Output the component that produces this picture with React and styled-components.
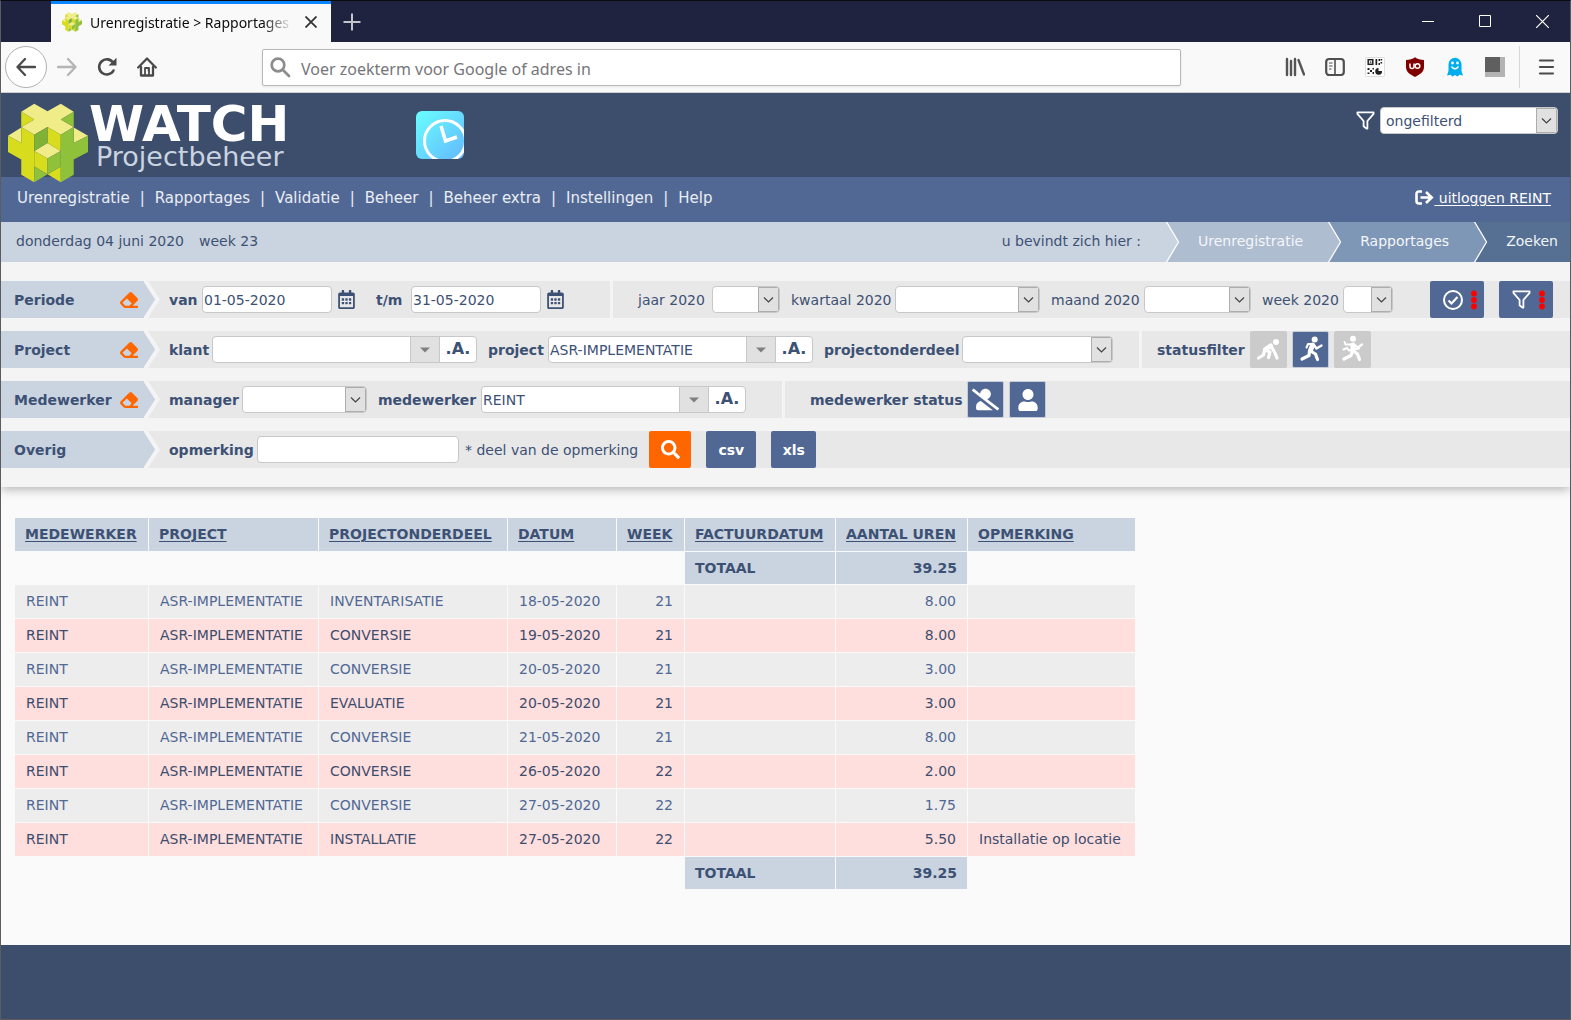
import React from 'react'
import styled, { createGlobalStyle } from 'styled-components'
import { FaEraser, FaUser, FaUserSlash, FaSearch, FaRegCalendarAlt } from 'react-icons/fa'

const hours = [
    { project: 'ASR-IMPLEMENTATIE', part: 'INVENTARISATIE', date: '18-05-2020', week: 21, hours: '8.00', note: '' },
    { project: 'ASR-IMPLEMENTATIE', part: 'CONVERSIE', date: '19-05-2020', week: 21, hours: '8.00', note: '' },
    { project: 'ASR-IMPLEMENTATIE', part: 'CONVERSIE', date: '20-05-2020', week: 21, hours: '3.00', note: '' },
    { project: 'ASR-IMPLEMENTATIE', part: 'EVALUATIE', date: '20-05-2020', week: 21, hours: '3.00', note: '' },
    { project: 'ASR-IMPLEMENTATIE', part: 'CONVERSIE', date: '21-05-2020', week: 21, hours: '8.00', note: '' },
    { project: 'ASR-IMPLEMENTATIE', part: 'CONVERSIE', date: '26-05-2020', week: 22, hours: '2.00', note: '' },
    { project: 'ASR-IMPLEMENTATIE', part: 'CONVERSIE', date: '27-05-2020', week: 22, hours: '1.75', note: '' },
    { project: 'ASR-IMPLEMENTATIE', part: 'INSTALLATIE', date: '27-05-2020', week: 22, hours: '5.50', note: 'Installatie op locatie' },
]

const columns = [
    { title: 'MEDEWERKER', width: 133 },
    { title: 'PROJECT', width: 169 },
    { title: 'PROJECTONDERDEEL', width: 188 },
    { title: 'DATUM', width: 108 },
    { title: 'WEEK', width: 67 },
    { title: 'FACTUURDATUM', width: 150 },
    { title: 'AANTAL UREN', width: 131 },
    { title: 'OPMERKING', width: 167 },
]

const menu = ['Urenregistratie', 'Rapportages', 'Validatie', 'Beheer', 'Beheer extra', 'Instellingen', 'Help']

/* ---------- drawings ---------- */

const CubeLogo = ({ size }) => (
    <svg width={size} height={size} viewBox="24 41 241 238" aria-hidden="true">
        <g fill="#f0ec88">
            <path d="M24 138L64 113V160Z" />
            <path d="M265 138L222 113V160Z" />
            <path d="M64 66L103 42L143 64L183 42L222 66L183 89L222 112L183 135L143 112L103 135L64 112L103 89Z" />
            <path d="M103 184L143 160L183 184L143 207Z" />
        </g>
        <g fill="#d7dc1c">
            <path d="M64 66L103 89L64 112Z" />
            <path d="M24 138L64 160V112L103 135V278L64 256V210L24 187Z" />
            <path d="M103 184L143 207V254L103 231Z" />
            <path d="M183 135L143 112V160L183 184Z" />
            <path d="M183 278L143 254L183 231Z" />
        </g>
        <g fill="#90c13b">
            <path d="M222 66L183 89L222 112Z" />
            <path d="M265 138L222 160V112L183 135V278L222 256V210L265 187Z" />
            <path d="M183 184L143 207V254L183 231Z" />
            <path d="M103 278L143 254L103 231Z" />
        </g>
        <path fill="#80b236" d="M103 135L143 112V160L103 184Z" />
    </svg>
)

const ClockLogo = () => (
    <svg width="49" height="49" viewBox="0 0 49 49" aria-hidden="true">
        <defs>
            <linearGradient id="clockBg" x1="0" y1="0" x2="1" y2="1">
                <stop offset="0" stopColor="#68ffff" />
                <stop offset="1" stopColor="#64b8ff" />
            </linearGradient>
            <clipPath id="clockClip"><rect width="48" height="48" rx="6" /></clipPath>
        </defs>
        <g clipPath="url(#clockClip)">
            <rect width="48" height="48" fill="url(#clockBg)" />
            <circle cx="29" cy="30" r="20.5" fill="none" stroke="#fff" strokeWidth="3" />
            <path d="M25 15L29.5 30L41 26" fill="none" stroke="#fff" strokeWidth="3.5" />
        </g>
    </svg>
)

const FilterIcon = ({ size }) => (
    <svg width={size} height={size} viewBox="0 0 20 20" fill="none" stroke="currentColor" strokeWidth="1.9" strokeLinejoin="round" aria-hidden="true">
        <path d="M1.5 1.5H18.5V3L12 10.5V18.5H11L8 16V10.5L1.5 3Z" />
    </svg>
)

const CheckIcon = () => (
    <svg width="20" height="20" viewBox="0 0 20 20" fill="none" stroke="currentColor" strokeWidth="2" aria-hidden="true">
        <circle cx="10" cy="10" r="9" />
        <path d="M5.5 10.5L8.5 13.5L14.5 7" strokeWidth="2.2" />
    </svg>
)

const DotsIcon = () => (
    <svg width="6" height="20" viewBox="0 0 6 20" fill="#f00" aria-hidden="true">
        <circle cx="3" cy="3.5" r="2.9" />
        <circle cx="3" cy="10" r="2.9" />
        <circle cx="3" cy="16.5" r="2.9" />
    </svg>
)

const SignOutIcon = () => (
    <svg width="19" height="15" viewBox="0 0 19 15" fill="none" stroke="currentColor" strokeWidth="2.6" aria-hidden="true">
        <path d="M7 1.5H4Q1.5 1.5 1.5 4V11Q1.5 13.5 4 13.5H7" />
        <path d="M5.5 7.5H16M11 2L16.7 7.5L11 13" />
    </svg>
)

const ArrowDown = () => (
    <svg width="11" height="6" viewBox="0 0 11 6" fill="none" stroke="#444" strokeWidth="1.2" aria-hidden="true">
        <path d="M1 0.5L5.5 5L10 0.5" />
    </svg>
)

const Caret = () => (
    <svg width="10" height="6" viewBox="0 0 10 6" fill="#808080" aria-hidden="true">
        <path d="M0 0.5H10L5 5.5Z" />
    </svg>
)

// arrow end between two coloured blocks
const Arrow = ({ from, to, height, line }) => (
    <svg width="16" height={height} viewBox={`0 0 16 ${height}`} aria-hidden="true">
        <rect width="16" height={height} fill={to} />
        <path d={`M0 0H1L13 ${height / 2}L1 ${height}H0Z`} fill={from} />
        <path d={`M1 -1L13.5 ${height / 2}L1 ${height + 1}`} fill="none" stroke={line ? '#f4f4f4' : '#fff'} strokeWidth={line || 1.3} />
    </svg>
)

const Figure = ({ children }) => (
    <svg width="37" height="37" viewBox="0 0 37 37" fill="none" stroke="#fff" strokeWidth="3.2" strokeLinecap="round" strokeLinejoin="round" aria-hidden="true">
        {children}
    </svg>
)

const StartFigure = () => (
    <Figure>
        <circle cx="26" cy="11" r="3" fill="#fff" stroke="none" />
        <path d="M20.5 15L15.5 18.5" strokeWidth="5" />
        <path d="M21 15L24.5 21L27 27" />
        <path d="M15.5 19L20 21L18.5 26.5" />
        <path d="M14.5 19.5L13.5 24L8.5 27" />
    </Figure>
)

const RunFigure = () => (
    <Figure>
        <circle cx="22.7" cy="8.5" r="3" fill="#fff" stroke="none" />
        <path d="M20.5 14L18.5 19.5" strokeWidth="5" />
        <path d="M20 13L16 13L14.5 16.5" strokeWidth="2" />
        <path d="M22 14L24.5 17.5L29.5 14.5" strokeWidth="2.4" />
        <path d="M18.5 20L23.5 23L25.5 28.5" />
        <path d="M17.5 20L17 24.5L10 28" />
    </Figure>
)

const FinishFigure = () => (
    <Figure>
        <circle cx="19" cy="7.7" r="3" fill="#fff" stroke="none" />
        <path d="M19 14L19 19.5" strokeWidth="5" />
        <path d="M17.5 13.5L11.5 13.5L10.5 11" strokeWidth="2" />
        <path d="M20.5 14L24 16.5L28 13.5" strokeWidth="2.2" />
        <path d="M9.5 18.5L13 17L15 19.5L25 17.5" strokeWidth="2" />
        <path d="M19.5 20L23.5 23L25.5 28.5" />
        <path d="M18.5 20L17 24.5L10 28" />
    </Figure>
)

const BackIcon = () => (
    <svg width="20" height="20" viewBox="0 0 20 20" fill="none" stroke="#4a4a4a" strokeWidth="2.3" strokeLinecap="round" strokeLinejoin="round" aria-hidden="true">
        <path d="M19 10H1.5M9 2L1.5 10L9 18" />
    </svg>
)

const ForwardIcon = () => (
    <svg width="20" height="20" viewBox="0 0 20 20" fill="none" stroke="#b5b5b5" strokeWidth="2.3" strokeLinecap="round" strokeLinejoin="round" aria-hidden="true">
        <path d="M1 10H18.5M11 2L18.5 10L11 18" />
    </svg>
)

const ReloadIcon = () => (
    <svg width="20" height="20" viewBox="0 0 20 20" fill="none" stroke="#4a4a4a" strokeWidth="2.6" aria-hidden="true">
        <path d="M16.5 13.5A7.6 7.6 0 1 1 16 5.5" strokeLinecap="round" />
        <path d="M19.5 0.8V8.5H11.5Z" fill="#4a4a4a" stroke="none" />
    </svg>
)

const HomeIcon = () => (
    <svg width="20" height="20" viewBox="0 0 20 20" fill="none" stroke="#4a4a4a" strokeWidth="2.3" strokeLinecap="round" strokeLinejoin="round" aria-hidden="true">
        <path d="M1.2 10.5L10 1.5L18.8 10.5" />
        <path d="M4 10V18.5H16V10" />
        <path d="M8 18V11H12V18" strokeWidth="1.8" />
        <path d="M11.5 12V14" strokeWidth="1.5" />
    </svg>
)

const MagnifierIcon = () => (
    <svg width="21" height="21" viewBox="0 0 21 21" fill="none" stroke="#8c8c8c" strokeWidth="2.7" strokeLinecap="round" aria-hidden="true">
        <circle cx="8" cy="8" r="6.3" />
        <path d="M13 13L19 19" />
    </svg>
)

const LibraryIcon = () => (
    <svg width="20" height="20" viewBox="0 0 20 20" stroke="#555" strokeWidth="2.4" strokeLinecap="round" aria-hidden="true">
        <path d="M2 2V18M6 4V18M10 2V18M13.5 3L19 17.5" />
    </svg>
)

const SidebarIcon = () => (
    <svg width="20" height="20" viewBox="0 0 20 20" fill="none" stroke="#4f4f4f" strokeWidth="2.2" aria-hidden="true">
        <rect x="1.2" y="2" width="17.6" height="16" rx="3" />
        <path d="M10 2V18" strokeWidth="1.6" />
        <path d="M4 6H7.5M4 9H7.5M4 12H6.5" strokeWidth="1.2" />
    </svg>
)

const QrIcon = () => (
    <svg width="20" height="20" viewBox="0 0 20 20" aria-hidden="true">
        <rect x="0.5" y="0.5" width="19" height="19" rx="1" fill="#fff" stroke="#ddd" />
        <rect x="3.2" y="2.7" width="4.6" height="4.6" fill="none" stroke="#222" strokeWidth="1.5" />
        <g fill="#222">
            <path d="M4.8 4.5h1.5v1.3h-1.5zM10.5 2h1.7v6h-1.7zM13.5 2h1.5v2h-1.5zM15.5 2h1.7v1.5h-1.7zM15.5 5h1.7v1.5h-1.7zM13.5 6h1.5v2h-1.5z" />
            <path d="M2.5 11h2v2h-2zM5 13h2v2h-2zM7.5 11h1.5v1.5h-1.5zM2.5 15.5h2v1.5h-2zM7.5 15h1.5v2h-1.5z" />
            <path d="M13.5 11V14H17A3.4 3.4 0 1 1 13.5 11Z" />
        </g>
    </svg>
)

const ShieldIcon = () => (
    <svg width="20" height="20" viewBox="0 0 20 20" aria-hidden="true">
        <path d="M10 0.3C7.5 2.2 4.5 3 1 3V10C1 15 5 17.5 10 20C15 17.5 19 15 19 10V3C15.5 3 12.5 2.2 10 0.3Z" fill="#800000" />
        <path d="M5 6.5V9.5Q5 11.5 7 11.5Q9 11.5 9 9.5V6.5" fill="none" stroke="#fff" strokeWidth="1.5" />
        <circle cx="12.5" cy="9" r="2.3" fill="none" stroke="#fff" strokeWidth="1.5" />
    </svg>
)

const GhostIcon = () => (
    <svg width="20" height="20" viewBox="0 0 20 20" aria-hidden="true">
        <path d="M3.5 7.5A6.5 6.8 0 0 1 16.5 7.5V14L18 18.5L14.5 17.8L12.5 19.5L10 18L7.5 19.5L5.5 17.8L2 18.5L3.5 14Z" fill="#00aef0" />
        <circle cx="7.5" cy="6" r="1.4" fill="#fff" />
        <circle cx="12.5" cy="6" r="1.4" fill="#fff" />
        <path d="M6.5 9.5Q10 14 13.5 9.5" fill="none" stroke="#fff" strokeWidth="1.3" />
    </svg>
)

const SquareIcon = () => (
    <svg width="20" height="20" viewBox="0 0 20 20" aria-hidden="true">
        <path d="M0 0H20V20H0Z" fill="#b3b3b3" />
        <path d="M0 0H15V15H0Z" fill="#5f5f5f" />
    </svg>
)

const MenuIcon = () => (
    <svg width="17" height="20" viewBox="0 0 17 20" stroke="#4a4a4a" strokeWidth="2.2" strokeLinecap="round" aria-hidden="true">
        <path d="M2 3.5H15M2 10H15M2 16.5H15" />
    </svg>
)

/* ---------- small building blocks ---------- */

const Select = ({ id, width, label, value = '' }) => (
    <SelectBox $width={width}>
        <select id={id} aria-label={label} defaultValue={value}>
            <option value={value}>{value}</option>
        </select>
        <SelectArrow><ArrowDown /></SelectArrow>
    </SelectBox>
)

const Combo = ({ id, value = '' }) => (
    <ComboBox>
        <input id={id} type="text" defaultValue={value} />
        <DropButton type="button" aria-label="lijst"><Caret /></DropButton>
        <AllButton type="button">.A.</AllButton>
    </ComboBox>
)

const FilterName = ({ children, clear }) => (
    <>
        <RowName>
            {children}
            {clear && <ClearButton type="button" aria-label="wissen"><FaEraser size={18} /></ClearButton>}
        </RowName>
        <Arrow from="#cad4e0" to="#e8e8e8" height={37} line={4} />
    </>
)

const TotalRow = () => (
    <tr>
        <EmptyCell colSpan={5} />
        <TotalCell>TOTAAL</TotalCell>
        <TotalCell $right>39.25</TotalCell>
        <EmptyCell />
    </tr>
)

const App = () => {
    return (
        <Window>
            <GlobalStyle />

            <TabBar>
                <Tab>
                    <CubeLogo size={20} />
                    <TabTitle>Urenregistratie &gt; Rapportages</TabTitle>
                    <TabButton type="button" aria-label="tabblad sluiten">
                        <svg width="12" height="12" viewBox="0 0 12 12" stroke="#333" strokeWidth="1.8" aria-hidden="true"><path d="M0.5 0.5L11.5 11.5M11.5 0.5L0.5 11.5" /></svg>
                    </TabButton>
                </Tab>
                <TabButton type="button" aria-label="nieuw tabblad">
                    <svg width="18" height="18" viewBox="0 0 18 18" stroke="#c4c4cc" strokeWidth="2" aria-hidden="true"><path d="M9 0.5V17.5M0.5 9H17.5" /></svg>
                </TabButton>
                <WindowButtons>
                    <TabButton type="button" aria-label="minimaliseren">
                        <svg width="13" height="13" viewBox="0 0 13 13" stroke="#fff" aria-hidden="true"><path d="M0 6.5H12" /></svg>
                    </TabButton>
                    <TabButton type="button" aria-label="maximaliseren">
                        <svg width="13" height="13" viewBox="0 0 13 13" stroke="#fff" fill="none" aria-hidden="true"><path d="M0.5 0.5H11.5V11.5H0.5Z" /></svg>
                    </TabButton>
                    <TabButton type="button" aria-label="sluiten">
                        <svg width="13" height="13" viewBox="0 0 13 13" stroke="#fff" strokeWidth="1.2" aria-hidden="true"><path d="M0 0L13 13M13 0L0 13" /></svg>
                    </TabButton>
                </WindowButtons>
            </TabBar>

            <Toolbar>
                <BackButton type="button" aria-label="terug"><BackIcon /></BackButton>
                <ToolButtons>
                    <ToolButton type="button" aria-label="vooruit"><ForwardIcon /></ToolButton>
                    <ToolButton type="button" aria-label="vernieuwen"><ReloadIcon /></ToolButton>
                    <ToolButton type="button" aria-label="startpagina"><HomeIcon /></ToolButton>
                </ToolButtons>
                <AddressBar>
                    <MagnifierIcon />
                    <input type="text" aria-label="adres" placeholder="Voer zoekterm voor Google of adres in" />
                </AddressBar>
                <ToolButtons>
                    <ToolButton type="button" aria-label="bibliotheek"><LibraryIcon /></ToolButton>
                    <ToolButton type="button" aria-label="zijbalk"><SidebarIcon /></ToolButton>
                    <ToolButton type="button" aria-label="qr-code"><QrIcon /></ToolButton>
                    <ToolButton type="button" aria-label="blokkering"><ShieldIcon /></ToolButton>
                    <ToolButton type="button" aria-label="privacy"><GhostIcon /></ToolButton>
                    <ToolButton type="button" aria-label="extensie"><SquareIcon /></ToolButton>
                </ToolButtons>
                <MenuButton type="button" aria-label="menu"><MenuIcon /></MenuButton>
            </Toolbar>

            <Header>
                <Brand href="#home">
                    <CubeLogo size={80} />
                    <BrandText>
                        <BrandName>WATCH</BrandName>
                        <BrandSub>Projectbeheer</BrandSub>
                    </BrandText>
                </Brand>
                <ClockLink href="#klok" aria-label="klok"><ClockLogo /></ClockLink>
                <HeaderFilter>
                    <FilterIcon size={19} />
                    <Select width={178} label="filter" value="ongefilterd" />
                </HeaderFilter>
            </Header>

            <Nav>
                <NavList>
                    {menu.map((item) => (
                        <li key={item}><a href={`#${item}`}>{item}</a></li>
                    ))}
                </NavList>
                <Logout href="#uitloggen"><SignOutIcon /><u>&nbsp;uitloggen REINT</u></Logout>
            </Nav>

            <InfoBar>
                <span>donderdag 04 juni 2020</span>
                <span>week 23</span>
                <Crumbs>
                    <Crumb $text="#3d5174">u bevindt zich hier :</Crumb>
                    <Arrow from="#cad4e0" to="#afbdd1" height={40} />
                    <Crumb as="a" href="#urenregistratie" $bg="#afbdd1">Urenregistratie</Crumb>
                    <Arrow from="#afbdd1" to="#7f97b7" height={40} />
                    <Crumb as="a" href="#rapportages" $bg="#7f97b7">Rapportages</Crumb>
                    <Arrow from="#7f97b7" to="#557093" height={40} />
                    <Crumb as="a" href="#zoeken" $bg="#557093" $last>Zoeken</Crumb>
                </Crumbs>
            </InfoBar>

            <Filters>
                <FilterRow>
                    <FilterName clear>Periode</FilterName>
                    <Field>
                        <Label htmlFor="van" $width={33}>van</Label>
                        <TextInput id="van" $width={130} defaultValue="01-05-2020" />
                        <CalendarButton type="button" aria-label="kies begindatum"><FaRegCalendarAlt size={19} /></CalendarButton>
                    </Field>
                    <Field>
                        <Label htmlFor="tm" $width={35}>t/m</Label>
                        <TextInput id="tm" $width={130} defaultValue="31-05-2020" />
                        <CalendarButton type="button" aria-label="kies einddatum"><FaRegCalendarAlt size={19} /></CalendarButton>
                    </Field>
                    <Divider $space={25} />
                    <Field>
                        <Label htmlFor="jaar" $width={74} $light>jaar 2020</Label>
                        <Select id="jaar" width={68} />
                    </Field>
                    <Field>
                        <Label htmlFor="kwartaal" $width={104} $light>kwartaal 2020</Label>
                        <Select id="kwartaal" width={145} />
                    </Field>
                    <Field>
                        <Label htmlFor="maand" $width={93} $light>maand 2020</Label>
                        <Select id="maand" width={107} />
                    </Field>
                    <Field>
                        <Label htmlFor="week" $width={81} $light>week 2020</Label>
                        <Select id="week" width={50} />
                    </Field>
                    <RowActions>
                        <ActionButton type="button" $width={54} $dots aria-label="bevestigen"><CheckIcon /><DotsIcon /></ActionButton>
                        <ActionButton type="button" $width={54} $dots aria-label="filteren"><FilterIcon size={19} /><DotsIcon /></ActionButton>
                    </RowActions>
                </FilterRow>

                <FilterRow>
                    <FilterName clear>Project</FilterName>
                    <Field>
                        <Label htmlFor="klant" $width={43}>klant</Label>
                        <Combo id="klant" />
                    </Field>
                    <Field>
                        <Label htmlFor="project" $width={60}>project</Label>
                        <Combo id="project" value="ASR-IMPLEMENTATIE" />
                    </Field>
                    <Field>
                        <Label htmlFor="onderdeel" $width={138}>projectonderdeel</Label>
                        <Select id="onderdeel" width={151} />
                    </Field>
                    <Divider $space={15} />
                    <Label as="span" $width={93}>statusfilter</Label>
                    <StatusButtons>
                        <StatusButton type="button" aria-label="gestart"><StartFigure /></StatusButton>
                        <StatusButton type="button" aria-label="lopend" $active><RunFigure /></StatusButton>
                        <StatusButton type="button" aria-label="afgerond"><FinishFigure /></StatusButton>
                    </StatusButtons>
                </FilterRow>

                <FilterRow>
                    <FilterName clear>Medewerker</FilterName>
                    <Field>
                        <Label htmlFor="manager" $width={73}>manager</Label>
                        <Select id="manager" width={125} />
                    </Field>
                    <Field>
                        <Label htmlFor="medewerker" $width={103}>medewerker</Label>
                        <Combo id="medewerker" value="REINT" />
                    </Field>
                    <Divider $space={25} />
                    <Label as="span" $width={157}>medewerker status</Label>
                    <StatusButtons>
                        <StatusButton type="button" aria-label="inactief" $active><FaUserSlash size={27} /></StatusButton>
                        <StatusButton type="button" aria-label="actief" $active><FaUser size={22} /></StatusButton>
                    </StatusButtons>
                </FilterRow>

                <FilterRow>
                    <FilterName>Overig</FilterName>
                    <Field>
                        <Label htmlFor="opmerking" $width={88}>opmerking</Label>
                        <TextInput id="opmerking" $width={202} />
                        <Hint>* deel van de opmerking</Hint>
                    </Field>
                    <Exports>
                        <ActionButton type="submit" $width={42} $orange aria-label="zoeken"><FaSearch size={19} /></ActionButton>
                        <ActionButton type="button" $width={50}>csv</ActionButton>
                        <ActionButton type="button" $width={45}>xls</ActionButton>
                    </Exports>
                </FilterRow>
            </Filters>

            <Content>
                <Table>
                    <colgroup>
                        {columns.map((c) => <Col key={c.title} $width={c.width} />)}
                    </colgroup>
                    <thead>
                        <tr>
                            {columns.map((c) => <th key={c.title}><a href={`#${c.title}`}>{c.title}</a></th>)}
                        </tr>
                    </thead>
                    <tbody>
                        <TotalRow />
                        {hours.map((row, i) => (
                            <DataRow key={i} $pink={i % 2 === 1}>
                                <td>REINT</td>
                                <td>{row.project}</td>
                                <td>{row.part}</td>
                                <td>{row.date}</td>
                                <NumberCell>{row.week}</NumberCell>
                                <td />
                                <NumberCell>{row.hours}</NumberCell>
                                <td>{row.note}</td>
                            </DataRow>
                        ))}
                        <TotalRow />
                    </tbody>
                </Table>
            </Content>

            <Footer />
        </Window>
    )
}

export default App

const GlobalStyle = createGlobalStyle`
    * {
        box-sizing: border-box;
    }
    body {
        margin: 0;
        background-color: #fafafa;
        color: #3d5174;
        font-family: "DejaVu Sans", Verdana, sans-serif;
        font-size: 14px;
    }
    button, input, select {
        font: inherit;
        color: inherit;
        margin: 0;
    }
    button {
        padding: 0;
        border: 0;
        background: none;
        cursor: pointer;
    }
    svg {
        display: block;
        flex: none;
    }
    a {
        color: inherit;
        text-decoration: none;
    }
`;
const Window = styled.div`
    min-height: 100vh;
    display: flex;
    flex-direction: column;
    border: 1px solid #5c5c60;
    border-top-color: #0b0b14;
`;
const TabBar = styled.div`
    height: 41px;
    display: flex;
    align-items: center;
    padding-left: 50px;
    background-color: #202340;
    font-family: "Noto Sans", "Open Sans", sans-serif;
`;
const Tab = styled.div`
    width: 280px;
    height: 100%;
    display: flex;
    align-items: center;
    padding: 0 14px 2px 11px;
    margin-right: 12px;
    border-top: 3px solid #0a84ff;
    background-color: #f9f9fa;
    color: #0c0c0d;
`;
const TabTitle = styled.span`
    flex: 1;
    margin: 0 12px 0 8px;
    white-space: nowrap;
    mask-image: linear-gradient(to left, transparent, #000 30px);
`;
const TabButton = styled.button`
    display: flex;
    align-items: center;
`;
const WindowButtons = styled.div`
    display: flex;
    gap: 44px;
    margin-left: auto;
    padding-right: 21px;
`;
const Toolbar = styled.div`
    height: 51px;
    display: flex;
    align-items: center;
    padding: 0 15px 0 4px;
    background-color: #f9f9fa;
    border-bottom: 1px solid #cfcfd1;
    font-family: "Noto Sans", "Open Sans", sans-serif;
`;
const BackButton = styled.button`
    width: 42px;
    height: 42px;
    display: flex;
    align-items: center;
    justify-content: center;
    margin-right: 10px;
    border: 1px solid #b1b1b3;
    border-radius: 50%;
    background-color: #fff;
`;
const ToolButtons = styled.div`
    display: flex;
    gap: 20px;
`;
const ToolButton = styled.button`
    width: 20px;
    height: 20px;
`;
const AddressBar = styled.div`
    flex: 1;
    height: 37px;
    display: flex;
    align-items: center;
    margin: 0 104px 0 105px;
    padding: 0 7px;
    background-color: #fff;
    border: 1px solid #b8b8ba;
    border-radius: 2px;
    box-shadow: 0 1px 3px rgba(0, 0, 0, 0.08);
    input {
        flex: 1;
        border: 0;
        outline: 0;
        padding: 3px 0 0 10px;
        background: none;
        font-size: 16px;
    }
    input::placeholder {
        color: #76767a;
    }
`;
const MenuButton = styled.button`
    height: 42px;
    display: flex;
    align-items: center;
    margin-left: 14px;
    padding-left: 18px;
    border-left: 1px solid #d7d7db;
`;
const Header = styled.header`
    height: 84px;
    display: flex;
    align-items: flex-start;
    padding: 10px 12px 0 7px;
    background-color: #3d4d6c;
`;
const Brand = styled.a`
    display: flex;
    position: relative;
    z-index: 1;
    color: #fff;
`;
const BrandText = styled.span`
    display: flex;
    flex-direction: column;
    padding-top: 1px;
    margin-left: 1px;
`;
const BrandName = styled.strong`
    font-size: 50px;
    line-height: 40px;
`;
const BrandSub = styled.span`
    padding-left: 7px;
    color: #cad4e0;
    font-size: 27px;
    line-height: 26px;
`;
const ClockLink = styled.a`
    margin: 8px 0 0 127px;
`;
const HeaderFilter = styled.div`
    display: flex;
    align-items: center;
    gap: 5px;
    margin: 4px 0 0 auto;
    color: #fff;
`;
const Nav = styled.nav`
    height: 45px;
    display: flex;
    justify-content: space-between;
    align-items: center;
    padding: 0 19px 4px 16px;
    background-color: #526894;
    color: #e9edf4;
`;
const NavList = styled.ul`
    display: flex;
    margin: 0;
    padding: 0;
    list-style: none;
    font-size: 15px;
    li + li::before {
        content: "|";
        margin: 0 10px;
    }
`;
const Logout = styled.a`
    display: flex;
    align-items: center;
    color: #fff;
    u {
        text-underline-offset: 2px;
        text-decoration-thickness: 1px;
    }
`;
const InfoBar = styled.div`
    height: 40px;
    display: flex;
    align-items: center;
    gap: 15px;
    padding-left: 15px;
    background-color: #cad4e0;
    > span {
        padding-bottom: 2px;
    }
`;
const Crumbs = styled.div`
    display: flex;
    margin-left: auto;
`;
const Crumb = styled.span`
    height: 40px;
    display: flex;
    align-items: center;
    padding: 0 ${(p) => (p.$last ? 12 : 24)}px 2px 17px;
    background-color: ${(p) => p.$bg || 'transparent'};
    color: ${(p) => p.$text || '#f4f6fa'};
`;
const Filters = styled.form`
    display: flex;
    flex-direction: column;
    gap: 13px;
    padding: 19px 0;
    background-color: #f4f4f4;
    box-shadow: 0 2px 10px rgba(0, 0, 0, 0.3);
    clip-path: inset(0 0 -20px 0);
`;
const FilterRow = styled.div`
    height: 37px;
    display: flex;
    align-items: center;
    background-color: #e8e8e8;
`;
const RowName = styled.div`
    width: 143px;
    height: 100%;
    display: flex;
    align-items: center;
    justify-content: space-between;
    padding: 0 6px 0 13px;
    background-color: #cad4e0;
    font-weight: bold;
`;
const ClearButton = styled.button`
    color: #ff6600;
`;
const Field = styled.div`
    display: flex;
    align-items: center;
    margin-right: 11px;
    ${FilterRow} > svg + & {
        margin-left: 9px;
    }
`;
const Label = styled.label`
    min-width: ${(p) => p.$width}px;
    white-space: nowrap;
    font-weight: ${(p) => (p.$light ? 'normal' : 'bold')};
`;
const TextInput = styled.input`
    width: ${(p) => p.$width}px;
    height: 27px;
    padding: 0 1px;
    background-color: #fff;
    border: 1px solid #c8c8c8;
    border-radius: 4px;
`;
const CalendarButton = styled.button`
    margin: 0 9px 0 5px;
`;
const SelectBox = styled.span`
    width: ${(p) => p.$width}px;
    height: 27px;
    display: flex;
    overflow: hidden;
    background-color: #fff;
    border: 1px solid #c8c8c8;
    border-radius: 4px;
    color: #3d5174;
    select {
        flex: 1;
        min-width: 0;
        padding: 0 5px;
        appearance: none;
        border: 0;
        outline: 0;
        background: none;
    }
`;
const SelectArrow = styled.span`
    width: 21px;
    display: flex;
    align-items: center;
    justify-content: center;
    background-color: #e1e1e1;
    border: 1px solid #adadad;
`;
const ComboBox = styled.span`
    height: 27px;
    display: flex;
    overflow: hidden;
    background-color: #fff;
    border: 1px solid #c8c8c8;
    border-radius: 4px;
    input {
        width: 197px;
        padding: 0 1px;
        border: 0;
        outline: 0;
        background: none;
    }
`;
const DropButton = styled.button`
    width: 30px;
    display: flex;
    align-items: center;
    justify-content: center;
    background-color: #e1e1e1;
    border: solid #c8c8c8;
    border-width: 0 1px;
`;
const AllButton = styled.button`
    width: 36px;
    padding-bottom: 2px;
    font-size: 16px;
    font-weight: bold;
    line-height: 22px;
`;
const Divider = styled.span`
    width: 3px;
    height: 100%;
    margin: 0 ${(p) => p.$space}px;
    background-color: #f4f4f4;
`;
const RowActions = styled.div`
    display: flex;
    gap: 15px;
    margin-left: auto;
    padding-right: 17px;
`;
const Exports = styled.div`
    display: flex;
    gap: 15px;
`;
const ActionButton = styled.button`
    width: ${(p) => p.$width}px;
    height: 37px;
    display: flex;
    align-items: center;
    justify-content: center;
    gap: 8px;
    padding-left: ${(p) => (p.$dots ? 5 : 0)}px;
    border-radius: 2px;
    background-color: ${(p) => (p.$orange ? '#ff6600' : '#526894')};
    color: #fff;
    font-weight: bold;
`;
const StatusButtons = styled.div`
    display: flex;
    gap: 5px;
`;
const StatusButton = styled.button`
    width: 37px;
    height: 37px;
    display: flex;
    align-items: center;
    justify-content: center;
    border: 1px solid ${(p) => (p.$active ? '#c3cad8' : '#cbcbcb')};
    border-radius: 2px;
    background-color: ${(p) => (p.$active ? '#526894' : '#cbcbcb')};
    color: #fff;
`;
const Hint = styled.span`
    margin-left: 6px;
`;
const Content = styled.main`
    flex: 1;
    padding: 30px 13px;
`;
const Table = styled.table`
    border-spacing: 1px;
    line-height: 17px;
    th {
        height: 33px;
        padding: 0 10px;
        background-color: #cad4e0;
        text-align: left;
        a {
            text-decoration: underline;
            text-underline-offset: 2px;
        }
    }
`;
const Col = styled.col`
    width: ${(p) => p.$width}px;
`;
const TotalCell = styled.td`
    height: 32px;
    padding: 0 10px;
    background-color: #cad4e0;
    font-weight: bold;
    text-align: ${(p) => (p.$right ? 'right' : 'left')};
`;
const EmptyCell = styled.td`
    padding: 0;
`;
const DataRow = styled.tr`
    color: ${(p) => (p.$pink ? '#3d4d6c' : '#526894')};
    td {
        height: 33px;
        padding: 0 11px;
        background-color: ${(p) => (p.$pink ? '#ffdede' : '#ededed')};
    }
`;
const NumberCell = styled.td`
    text-align: right;
`;
const Footer = styled.footer`
    height: 74px;
    background-color: #3d4d6c;
`;
